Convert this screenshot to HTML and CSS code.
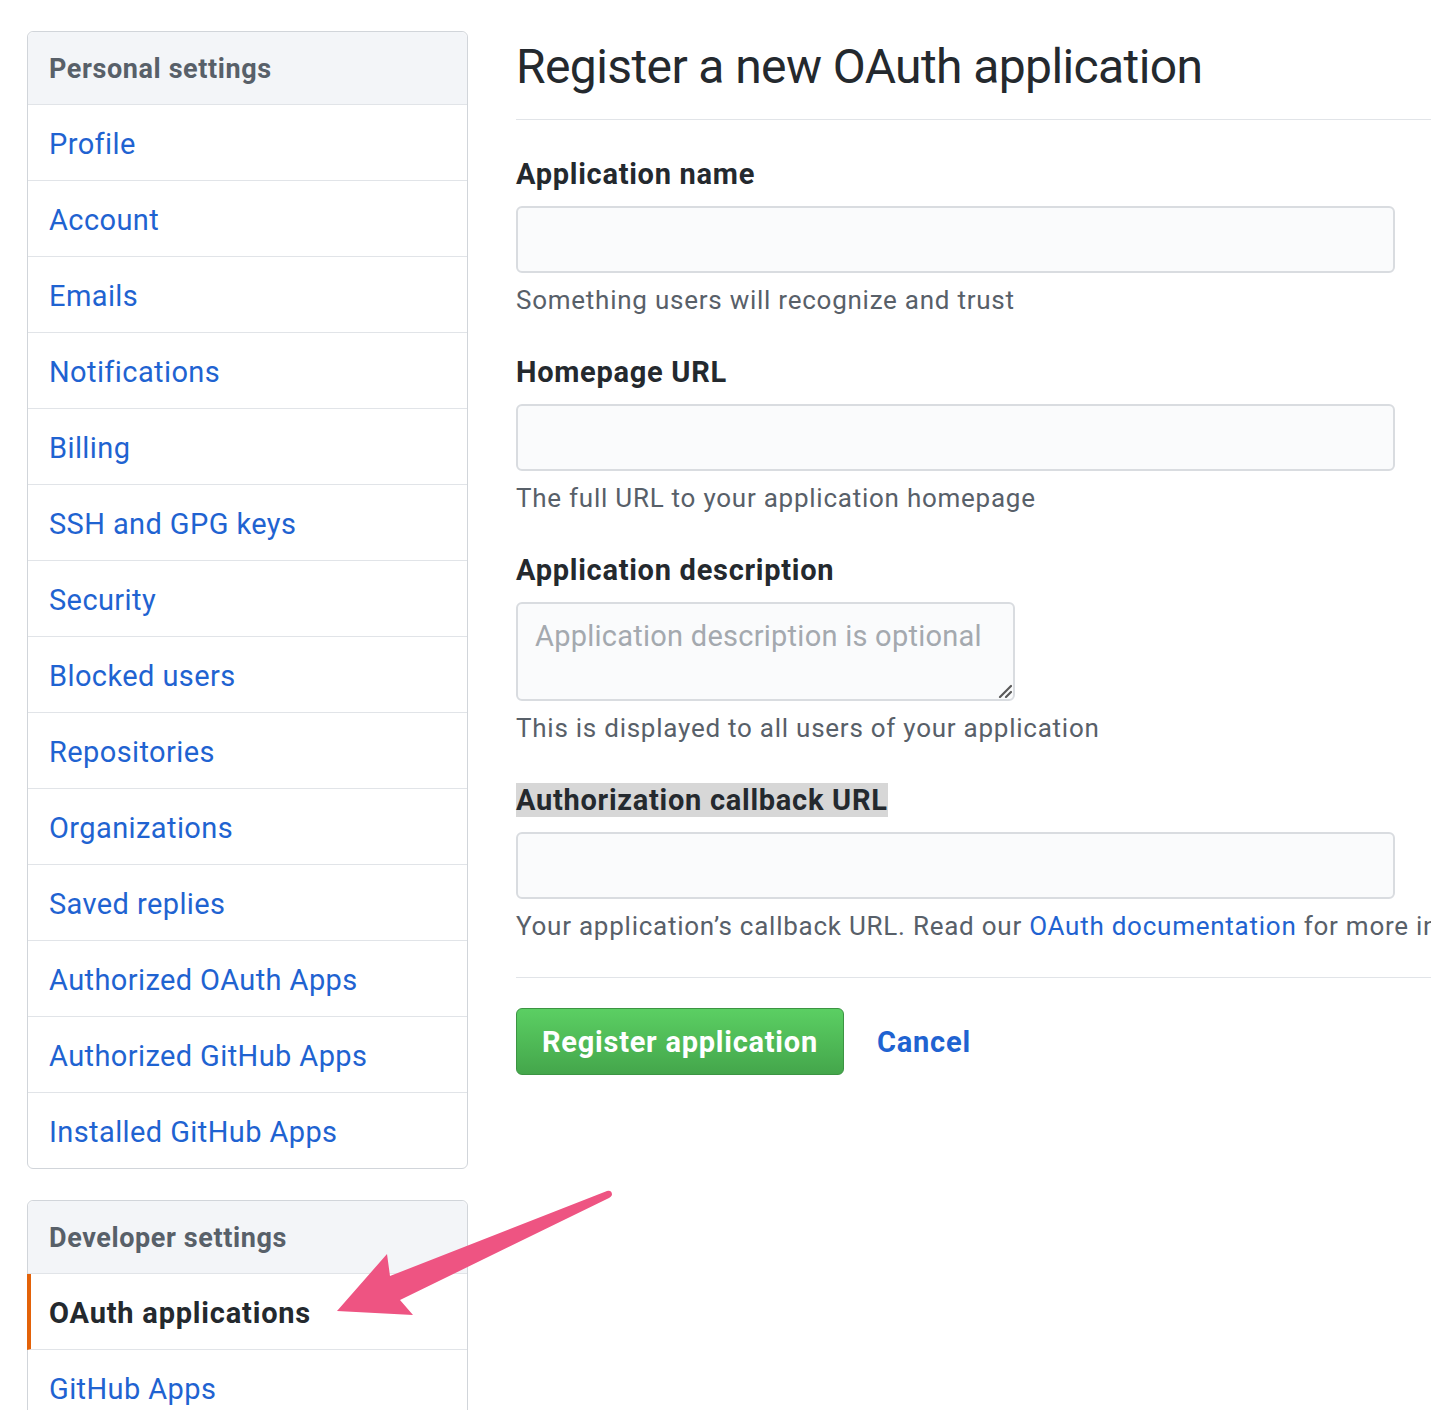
FILE: index.html
```html
<!DOCTYPE html>
<html lang="en">
<head>
<meta charset="utf-8">
<title>Register a new OAuth application</title>
<link rel="stylesheet" href="styles.css">
</head>
<body>
<div class="page">
  <aside class="sidebar">
    <nav class="menu">
      <div class="menu-heading">Personal settings</div>
      <a class="menu-item" href="#">Profile</a>
      <a class="menu-item" href="#">Account</a>
      <a class="menu-item" href="#">Emails</a>
      <a class="menu-item" href="#">Notifications</a>
      <a class="menu-item" href="#">Billing</a>
      <a class="menu-item" href="#">SSH and GPG keys</a>
      <a class="menu-item" href="#">Security</a>
      <a class="menu-item" href="#">Blocked users</a>
      <a class="menu-item" href="#">Repositories</a>
      <a class="menu-item" href="#">Organizations</a>
      <a class="menu-item" href="#">Saved replies</a>
      <a class="menu-item" href="#">Authorized OAuth Apps</a>
      <a class="menu-item" href="#">Authorized GitHub Apps</a>
      <a class="menu-item" href="#">Installed GitHub Apps</a>
    </nav>
    <nav class="menu">
      <div class="menu-heading">Developer settings</div>
      <a class="menu-item selected" href="#">OAuth applications</a>
      <a class="menu-item" href="#">GitHub Apps</a>
    </nav>
  </aside>
  <main class="main">
    <h1 class="title">Register a new OAuth application</h1>
    <form class="form">
      <div class="group">
        <label class="label">Application name</label>
        <input class="input" type="text">
        <p class="note">Something users will recognize and trust</p>
      </div>
      <div class="group">
        <label class="label">Homepage URL</label>
        <input class="input" type="text">
        <p class="note">The full URL to your application homepage</p>
      </div>
      <div class="group">
        <label class="label">Application description</label>
        <div class="textarea-wrap">
          <textarea class="textarea" placeholder="Application description is optional"></textarea>
          <svg class="grip" width="14" height="14" viewBox="0 0 14 14" aria-hidden="true">
            <path d="M2 13 L13 2 M8 13 L13 8" stroke="#5a5a5a" stroke-width="2.2" stroke-linecap="round"/>
          </svg>
        </div>
        <p class="note">This is displayed to all users of your application</p>
      </div>
      <div class="group">
        <label class="label"><span class="hl">Authorization callback URL</span></label>
        <input class="input" type="text">
        <p class="note">Your application’s callback URL. Read our <a class="link" href="#">OAuth documentation</a> for more information.</p>
      </div>
      <div class="actions">
        <button class="btn" type="button">Register application</button>
        <a class="cancel" href="#">Cancel</a>
      </div>
    </form>
  </main>
</div>
<svg class="arrow" width="1431" height="1410" viewBox="0 0 1431 1410" aria-hidden="true">
  <path d="M607 1191 Q612 1190 612 1195 Q611 1197 609 1198 L400 1300 L413 1315 L337 1311 L387 1254 L390 1276 Z" fill="#ee5482"/>
</svg>
</body>
</html>
```
FILE: styles.css
```css
* { box-sizing: border-box; }
html, body {
  margin: 0;
  width: 1431px;
  height: 1410px;
  overflow: hidden;
  background: #fff;
}
body {
  font-family: Roboto, "Liberation Sans", sans-serif;
  color: #24292e;
  position: relative;
}
.page {
  display: flex;
  gap: 48px;
  padding: 31px 0 0 27px;
}
.sidebar {
  width: 441px;
  flex: none;
  display: flex;
  flex-direction: column;
  gap: 31px;
}
.menu {
  display: flex;
  flex-direction: column;
  border: 1px solid #d1d5da;
  border-radius: 6px;
  background: #fff;
}
.menu-heading {
  height: 73px;
  display: flex;
  align-items: center;
  padding: 2px 0 0 21px;
  background: #f3f5f8;
  border-bottom: 1px solid #e1e4e8;
  border-radius: 6px 6px 0 0;
  font-size: 27px;
  font-weight: 700;
  letter-spacing: 0.6px;
  color: #586069;
}
.menu-item {
  height: 76px;
  display: flex;
  align-items: center;
  padding: 2px 0 0 21px;
  border-bottom: 1px solid #e1e4e8;
  font-size: 29px;
  letter-spacing: 0.4px;
  color: #1f63d1;
  text-decoration: none;
}
.menu-item:last-child { border-bottom: 0; height: 75px; }
.menu-item.selected {
  border-left: 4px solid #e36209;
  padding-left: 18px;
  margin-left: -1px;
  color: #24292e;
  font-weight: 700;
  letter-spacing: 0.8px;
}
.main {
  flex: none;
  width: 915px;
}
.title {
  margin: 0;
  padding: 6px 0 22px;
  font-size: 48px;
  line-height: 60px;
  font-weight: 400;
  letter-spacing: -0.6px;
  color: #24292e;
  border-bottom: 1px solid #e1e4e8;
}
.form {
  padding-top: 34px;
}
.group {
  display: flex;
  flex-direction: column;
  align-items: flex-start;
  margin-bottom: 34px;
}
.label {
  font-size: 29px;
  line-height: 40px;
  font-weight: 700;
  letter-spacing: 0.72px;
  color: #24292e;
  margin-bottom: 12px;
}
.hl { background: #d7d7d7; }
.input, .textarea {
  width: 879px;
  height: 67px;
  background: #fafbfc;
  border: 2px solid #d9dce0;
  border-radius: 6px;
  font-family: inherit;
  font-size: 29px;
  padding: 0 17px;
}
.textarea-wrap {
  position: relative;
  width: 499px;
  height: 99px;
}
.textarea {
  display: block;
  width: 499px;
  height: 99px;
  padding: 12px 17px;
  resize: none;
  line-height: 40px;
  letter-spacing: 0.25px;
}
.textarea::placeholder { color: #a4a9af; }
.grip {
  position: absolute;
  right: 3px;
  bottom: 3px;
}
.note {
  margin: 9px 0 0;
  font-size: 26px;
  line-height: 36px;
  letter-spacing: 0.75px;
  color: #586069;
  white-space: nowrap;
}
.link { color: #1f63d1; text-decoration: none; }
.actions {
  border-top: 1px solid #e1e4e8;
  margin-top: -1px;
  padding-top: 30px;
  display: flex;
  align-items: center;
  gap: 33px;
}
.btn {
  height: 67px;
  padding: 0 25px;
  font-family: inherit;
  font-size: 29px;
  font-weight: 700;
  letter-spacing: 0.75px;
  color: #fff;
  background: linear-gradient(#5bcf63, #44a64b);
  border: 1px solid #3c9443;
  border-radius: 6px;
}
.cancel {
  font-size: 29px;
  font-weight: 700;
  letter-spacing: 0.8px;
  color: #1f63d1;
  text-decoration: none;
}
.arrow {
  position: absolute;
  left: 0;
  top: 0;
  pointer-events: none;
}
```
